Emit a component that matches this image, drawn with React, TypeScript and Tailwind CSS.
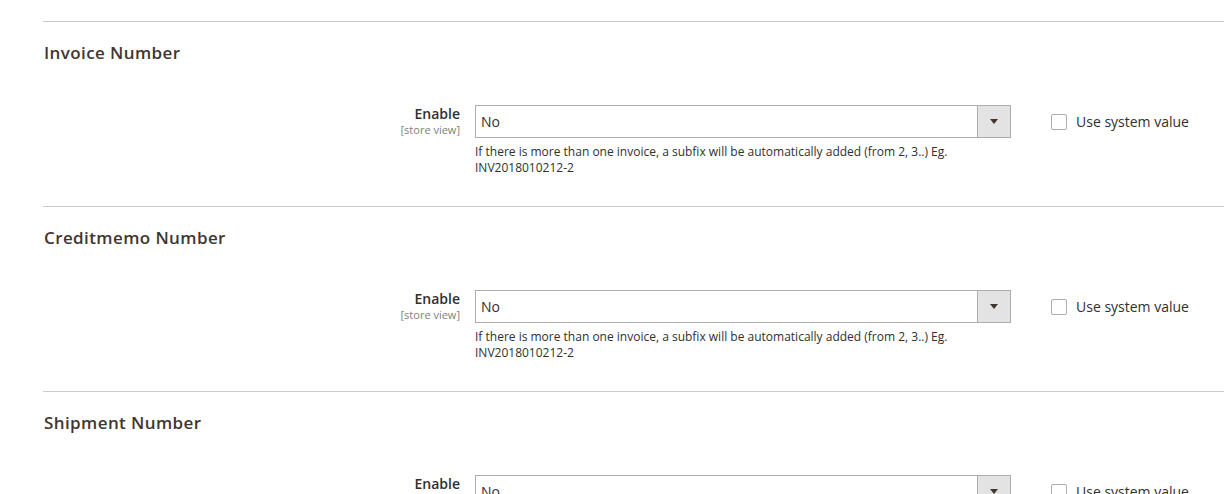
import React from "react";

const sections = ["Invoice Number", "Creditmemo Number", "Shipment Number"];

function Row() {
  return (
    <div className="flex items-start mt-[41px]">
      <div className="w-[417px] shrink-0 text-right">
        <div className="text-[14px] leading-[18px] font-semibold text-[#303030]">Enable</div>
        <div className="text-[11px] leading-[14px] text-[#808080]">[store view]</div>
      </div>
      <div className="ml-[15px] w-[536px] shrink-0">
        <div className="flex h-[33px] border border-[#adadad] bg-white">
          <div className="flex-1 pl-[5px] flex items-center text-[14px] text-[#303030]">No</div>
          <div className="w-[33px] border-l border-[#adadad] bg-[#e3e3e3] flex items-center justify-center">
            <svg width="8" height="5" viewBox="0 0 8 5">
              <path d="M0 0 H8 L4 5 Z" fill="#41362f" />
            </svg>
          </div>
        </div>
        <div className="mt-[6px] text-[12px] leading-[16px] text-[#303030]">
          If there is more than one invoice, a subfix will be automatically added (from 2, 3..) Eg. INV2018010212-2
        </div>
      </div>
      <div className="ml-[40px] flex items-center h-[33px] gap-[9px]">
        <div className="w-[16px] h-[16px] border border-[#adadad] rounded-[2px] bg-white" />
        <span className="text-[14px] text-[#303030]">Use system value</span>
      </div>
    </div>
  );
}

export default function App() {
  return (
    <div
      className="w-[1224px] h-[494px] overflow-hidden bg-white pt-[21px]"
      style={{ fontFamily: '"Open Sans", "Liberation Sans", sans-serif' }}
    >
      <div className="ml-[43px]">
        {sections.map((s) => (
          <div key={s} className="border-t border-[#cccccc] pb-[30px]">
            <h2 className="pt-[20px] pl-[1px] text-[17px] leading-[22px] font-semibold text-[#41362f] tracking-[0.4px]">
              {s}
            </h2>
            <Row />
          </div>
        ))}
      </div>
    </div>
  );
}
